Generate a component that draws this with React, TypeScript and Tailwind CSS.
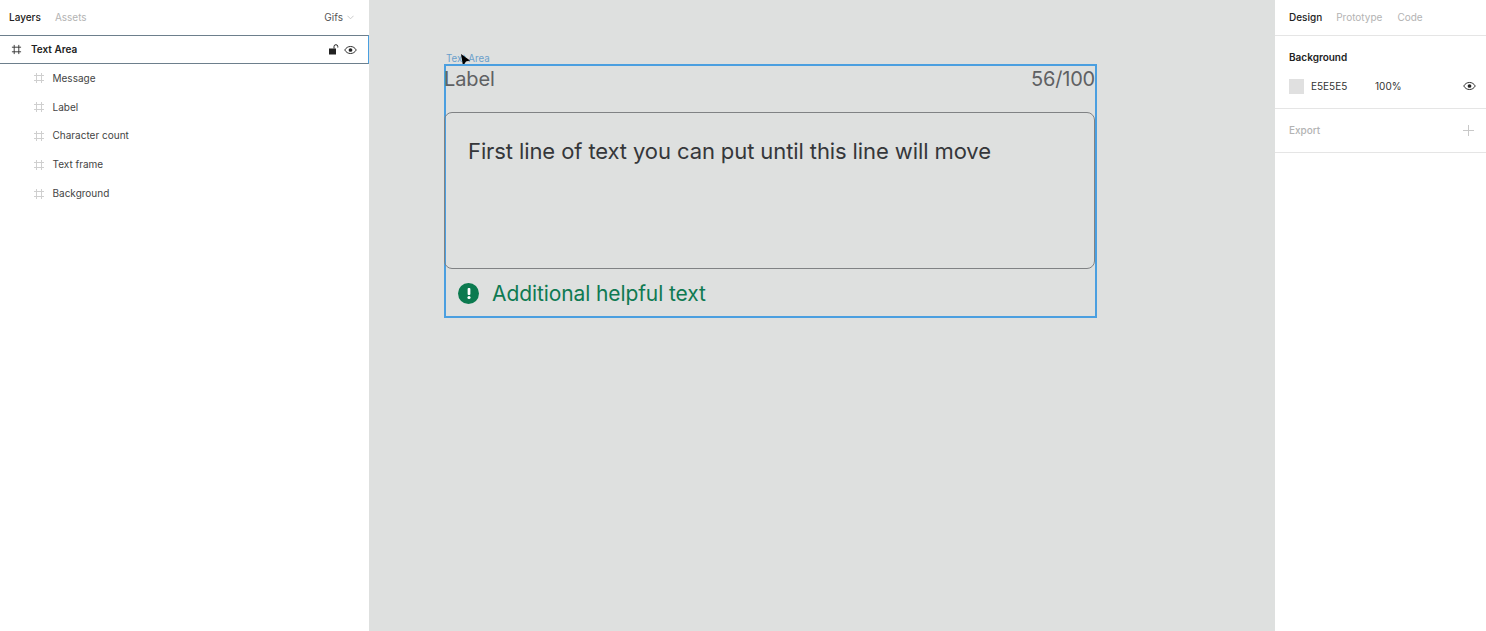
const layers = ["Message", "Label", "Character count", "Text frame", "Background"];

const FrameIcon = ({ className }: { className: string }) => (
  <svg viewBox="0 0 12 12" className={className} fill="none" stroke="currentColor" strokeWidth="1">
    <path d="M3.500 1v10M8.500 1v10M1 3.500h10M1 8.500h10" />
  </svg>
);

const EyeIcon = () => (
  <svg viewBox="0 0 14 10" className="h-[10px] w-[13px] text-[#222]" fill="none" stroke="currentColor" strokeWidth="1">
    <path d="M.8 5C2.200 2.600 4.400 1.200 7 1.200S11.800 2.600 13.200 5C11.800 7.400 9.600 8.800 7 8.800S2.200 7.400.8 5Z" />
    <circle cx="7" cy="5" r="2" fill="currentColor" stroke="none" />
  </svg>
);

const App = () => {
  return (
    <div className="flex h-[631px] w-[1486px] overflow-hidden bg-[#dee0df] font-['Inter',sans-serif] text-[10px] text-[#333]">
      <aside className="flex w-[369px] shrink-0 flex-col bg-white">
        <div className="flex h-[35px] items-center pl-[9px] pr-[10px]">
          <span className="font-medium text-[#222]">Layers</span>
          <span className="ml-[14px] text-[#b3b3b3]">Assets</span>
          <span className="ml-auto text-[#555]">Gifs</span>
          <svg viewBox="0 0 8 5" className="ml-[4px] mr-[5px] h-[5px] w-[7px] text-[#c4c4c4]" fill="none" stroke="currentColor">
            <path d="M.5.5 4 4 7.500.5" />
          </svg>
        </div>
        <div className="flex h-[29px] items-center border border-l-0 border-y-[#6d7f8c] border-r-[#4a9fe0] pl-[11px] pr-[11px]">
          <FrameIcon className="h-[11px] w-[11px] text-[#333]" />
          <span className="ml-[9px] font-semibold text-[#222]">Text Area</span>
          <svg viewBox="0 0 10 11" className="ml-auto h-[11px] w-[10px] text-[#222]">
            <rect x="0" y="4.500" width="7" height="6" fill="currentColor" />
            <path d="M5 4.500V2.600a1.900 1.900 0 0 1 3.800 0V3.500" fill="none" stroke="currentColor" />
          </svg>
          <span className="ml-[5px] flex"><EyeIcon /></span>
        </div>
        <div className="flex flex-col">
          {layers.map((name) => (
            <div key={name} className="flex h-[28.800px] items-center pl-[33px]">
              <FrameIcon className="h-[12px] w-[12px] text-[#cfcfcf]" />
              <span className="ml-[7.500px] text-[#444]">{name}</span>
            </div>
          ))}
        </div>
      </aside>

      <main className="relative flex-1 cursor-default">
        <span className="absolute left-[77px] top-[53px] text-[9.700px] leading-[12px] text-[#6a9fcb]">Text Area</span>
        <svg viewBox="0 0 12 14" className="absolute left-[90px] top-[52px] h-[14px] w-[12px]">
          <path d="M2 2 11 8.500 7 9.500 4 14Z" fill="#000" />
        </svg>
        <section className="absolute left-[75px] top-[64px] flex h-[254px] w-[653px] flex-col border-2 border-[#4a9fe0] font-['Inter',sans-serif]">
          <div className="flex h-[24px] items-center justify-between pt-px text-[20px] leading-[24px] text-[#5f6163]">
            <span className="-ml-[2px] tracking-[-0.1px]">Label</span>
            <span className="tracking-[-0.2px]">56/100</span>
          </div>
          <div className="-ml-[2px] mt-[22px] h-[157px] rounded-[8px] border border-[#808284] pl-[23px] pt-[24px] text-[22px] leading-[29px] tracking-[-0.1px] text-[#35373a]">
            First line of text you can put until this line will move
          </div>
          <div className="flex flex-1 items-center pl-[12px] pt-[2px]">
            <span className="flex h-[21px] w-[21px] items-center justify-center rounded-full bg-[#0b7a4f]">
              <svg viewBox="0 0 4 12" className="h-[11px] w-[4px]" fill="#fff">
                <rect x="0.500" y="0" width="3" height="7.500" rx="1" />
                <circle cx="2" cy="10.300" r="1.700" />
              </svg>
            </span>
            <span className="ml-[13px] text-[21px] leading-[26px] tracking-[-0.1px] text-[#0f7a52]">Additional helpful text</span>
          </div>
        </section>
      </main>

      <aside className="flex w-[211px] shrink-0 flex-col bg-white">
        <div className="flex h-[36px] items-center gap-[14px] border-b border-[#e5e5e5] px-[14px]">
          <span className="font-medium text-[#222]">Design</span>
          <span className="text-[#b3b3b3]">Prototype</span>
          <span className="ml-px text-[#b3b3b3]">Code</span>
        </div>
        <div className="h-[73px] border-b border-[#e5e5e5] px-[14px]">
          <div className="pt-[15px] font-semibold leading-[12px] text-[#222]">Background</div>
          <div className="mt-[15.500px] flex items-center">
            <span className="h-[15px] w-[15px] bg-[#e0e0e0]" />
            <span className="ml-[7px] w-[64px] text-[#333]">E5E5E5</span>
            <span className="text-[#333]">100%</span>
            <span className="ml-auto -mr-[4px] flex"><EyeIcon /></span>
          </div>
        </div>
        <div className="flex h-[44px] items-center border-b border-[#e5e5e5] pl-[14px] pr-[12px] font-medium text-[#b3b3b3]">
          Export
          <svg viewBox="0 0 11 11" className="ml-auto h-[11px] w-[11px] text-[#c8c8c8]" stroke="currentColor">
            <path d="M5.500 0v11M0 5.500h11" />
          </svg>
        </div>
      </aside>
    </div>
  );
};

export default App;
